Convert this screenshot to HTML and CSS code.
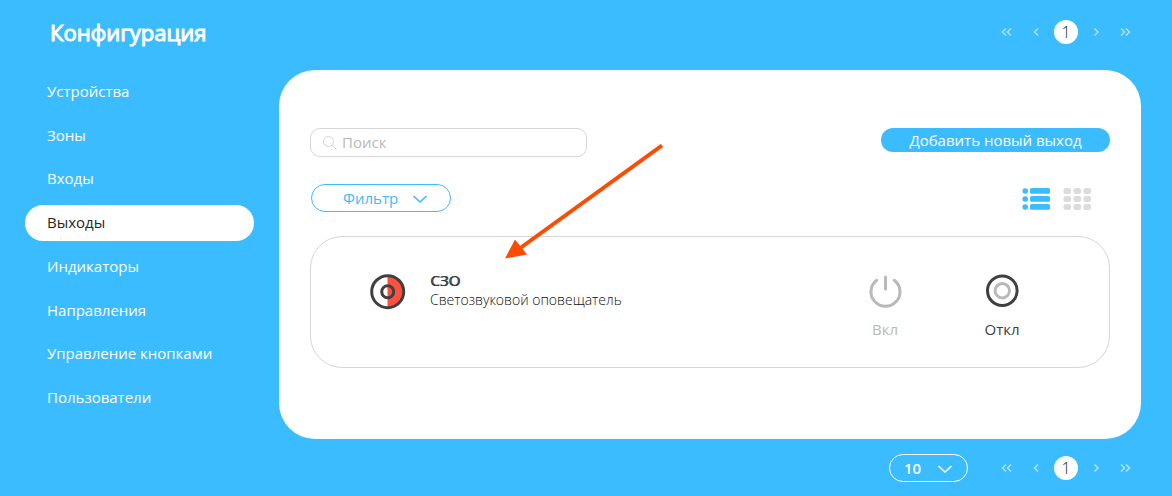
FILE: index.html
```
<!DOCTYPE html>
<html lang="ru">
<head>
    <meta charset="UTF-8">
    <meta name="viewport" content="width=device-width, initial-scale=1.0">
    <title>Конфигурация</title>
    <link rel="stylesheet" href="styles.css">
</head>
<body>
    <header class="header">
        <h1>Конфигурация</h1>
        <nav class="pager" aria-label="Страницы">
            <button type="button" aria-label="Первая"><svg width="12" height="10" viewBox="0 0 12 10"><path d="M6 1.500 2.500 5 6 8.500M11 1.500 7.500 5 11 8.500"/></svg></button>
            <button type="button" aria-label="Назад"><svg width="12" height="10" viewBox="0 0 12 10"><path d="M8 1.500 4.500 5 8 8.500"/></svg></button>
            <button type="button" class="current">1</button>
            <button type="button" aria-label="Вперёд"><svg width="12" height="10" viewBox="0 0 12 10"><path d="M4.500 1.500 8 5 4.500 8.500"/></svg></button>
            <button type="button" aria-label="Последняя"><svg width="12" height="10" viewBox="0 0 12 10"><path d="M1 1.500 4.500 5 1 8.500M6 1.500 9.500 5 6 8.500"/></svg></button>
        </nav>
    </header>
    <div class="layout">
        <nav class="menu">
            <a href="#devices">Устройства</a>
            <a href="#zones">Зоны</a>
            <a href="#inputs">Входы</a>
            <a href="#outputs" class="active">Выходы</a>
            <a href="#indicators">Индикаторы</a>
            <a href="#directions">Направления</a>
            <a href="#buttons">Управление кнопками</a>
            <a href="#users">Пользователи</a>
        </nav>
        <main class="panel">
            <div class="toolbar">
                <label class="search">
                    <svg width="14" height="14" viewBox="0 0 14 14"><circle cx="5.500" cy="5.500" r="5"/><path d="M9 9l4.500 4.500"/></svg>
                    <input type="text" placeholder="Поиск" aria-label="Поиск">
                </label>
                <button type="button" class="add-button">Добавить новый выход</button>
            </div>
            <div class="filters">
                <div class="dropdown filter">
                    <select aria-label="Фильтр"><option>Фильтр</option></select>
                    <svg width="16" height="10" viewBox="0 0 16 10"><path d="M1.500 2l6.500 6 6.500-6"/></svg>
                </div>
                <div class="views">
                    <button type="button" aria-label="Список">
                        <svg width="28" height="22" viewBox="0 0 28 22" fill="#3bbcff">
                            <circle cx="3.200" cy="3" r="2.800"/><circle cx="3.200" cy="11" r="2.800"/><circle cx="3.200" cy="19" r="2.800"/>
                            <rect x="8" width="20" height="5.800" rx="1.500"/><rect x="8" y="8" width="20" height="5.800" rx="1.500"/><rect x="8" y="16" width="20" height="5.800" rx="1.500"/>
                        </svg>
                    </button>
                    <button type="button" aria-label="Плитка">
                        <svg width="28" height="22" viewBox="0 0 28 22" fill="#dcdcdc">
                            <rect x="0.500" width="7.500" height="6" rx="2"/><rect x="10.500" width="7.500" height="6" rx="2"/><rect x="20.500" width="7.500" height="6" rx="2"/>
                            <rect x="0.500" y="8" width="7.500" height="6" rx="2"/><rect x="10.500" y="8" width="7.500" height="6" rx="2"/><rect x="20.500" y="8" width="7.500" height="6" rx="2"/>
                            <rect x="0.500" y="16" width="7.500" height="6" rx="2"/><rect x="10.500" y="16" width="7.500" height="6" rx="2"/><rect x="20.500" y="16" width="7.500" height="6" rx="2"/>
                        </svg>
                    </button>
                </div>
            </div>
            <div class="card">
                <svg class="card-icon" width="36" height="36" viewBox="0 0 36 36" fill="none" stroke="#404042" stroke-width="3">
                    <path d="M17.500 1.500a16 16 0 0 1 0 32.500z" fill="#fc523d" stroke="none"/>
                    <circle cx="17.700" cy="17.700" r="16"/>
                    <circle cx="17.700" cy="17.700" r="6"/>
                </svg>
                <div class="card-text">
                    <h2>СЗО</h2>
                    <p>Светозвуковой оповещатель</p>
                </div>
                <div class="actions">
                    <button type="button" class="off">
                        <svg width="34" height="34" viewBox="0 0 34 34" fill="none" stroke="#b9b9b9" stroke-width="3" stroke-linecap="round">
                            <path d="M17.500 3v12M8.700 6.300a14.500 14.500 0 1 0 17.600 0"/>
                        </svg>
                        Вкл
                    </button>
                    <button type="button">
                        <svg width="34" height="34" viewBox="0 0 34 34" fill="none" stroke-width="3">
                            <circle cx="17.300" cy="16.700" r="14.800" stroke="#404042"/>
                            <circle cx="17.300" cy="16.700" r="7.200" stroke="#b9b9b9"/>
                        </svg>
                        Откл
                    </button>
                </div>
            </div>
            <!-- стрелка-указатель поверх панели -->
            <svg class="pointer" width="160" height="116" viewBox="0 0 160 116">
                <path d="M157 1.500L16 103.500" stroke="#ff4b00" stroke-width="4"/>
                <path d="M0 114.500L10 95.500 22 110.500z" fill="#ff4b00"/>
            </svg>
        </main>
    </div>
    <footer class="footer">
        <div class="dropdown page-size">
            <select aria-label="Записей на странице"><option>10</option></select>
            <svg width="16" height="10" viewBox="0 0 16 10"><path d="M1.500 2l6.500 6 6.500-6"/></svg>
        </div>
        <nav class="pager" aria-label="Страницы">
            <button type="button" aria-label="Первая"><svg width="12" height="10" viewBox="0 0 12 10"><path d="M6 1.500 2.500 5 6 8.500M11 1.500 7.500 5 11 8.500"/></svg></button>
            <button type="button" aria-label="Назад"><svg width="12" height="10" viewBox="0 0 12 10"><path d="M8 1.500 4.500 5 8 8.500"/></svg></button>
            <button type="button" class="current">1</button>
            <button type="button" aria-label="Вперёд"><svg width="12" height="10" viewBox="0 0 12 10"><path d="M4.500 1.500 8 5 4.500 8.500"/></svg></button>
            <button type="button" aria-label="Последняя"><svg width="12" height="10" viewBox="0 0 12 10"><path d="M1 1.500 4.500 5 1 8.500M6 1.500 9.500 5 6 8.500"/></svg></button>
        </nav>
    </footer>
</body>
</html>
```
FILE: styles.css
```
* {
    box-sizing: border-box;
}
body {
    margin: 0;
    padding: 0 31px 0 25px;
    font-family: "Open Sans", "Noto Sans", sans-serif;
    font-size: 15px;
    line-height: 20px;
    color: #404042;
    background-color: #3bbcff;
}
button, input, select {
    font: inherit;
    color: inherit;
    background: none;
    border: none;
    margin: 0;
    padding: 0;
}
button, select {
    cursor: pointer;
}
h1, h2, p {
    margin: 0;
}
svg {
    display: block;
}
.header {
    display: flex;
    justify-content: space-between;
    align-items: center;
    height: 70px;
    padding: 0 0 6px 25px;
}
.header h1 {
    font-size: 22px;
    line-height: 30px;
    font-weight: 400;
    -webkit-text-stroke: 1px white;
    color: white;
}
.pager {
    display: grid;
    grid-template-columns: repeat(5, 30px);
    align-items: center;
    justify-items: center;
}
.pager svg {
    fill: none;
    stroke: #b1e4ff;
    stroke-width: 1.5;
}
.pager .current {
    width: 24px;
    height: 24px;
    border-radius: 50%;
    background-color: white;
    color: #262626;
    font-size: 16px;
    font-weight: 300;
}
.layout {
    display: grid;
    grid-template-columns: 229px 1fr;
    gap: 25px;
}
.menu {
    display: flex;
    flex-direction: column;
    justify-content: space-between;
    padding: 4px 0 23px;
}
.menu a {
    padding: 7px 22px 9px;
    border-radius: 18px;
    color: white;
    font-weight: 500;
    text-decoration: none;
}
.menu .active {
    background-color: white;
    color: #262626;
    font-weight: 400;
}
.panel {
    position: relative;
    padding: 58px 31px 71px;
    border-radius: 36px;
    background-color: white;
}
.toolbar {
    display: flex;
    justify-content: space-between;
    align-items: flex-start;
}
.search {
    display: flex;
    align-items: center;
    gap: 5px;
    width: 277px;
    height: 29px;
    padding: 0 12px;
    border: 1px solid #d6d6d6;
    border-radius: 10px;
}
.search svg {
    fill: none;
    stroke: #d6d6d6;
}
.search input {
    flex: 1;
    min-width: 0;
    height: 20px;
    margin-bottom: 2px;
    outline: none;
}
.search input::placeholder {
    color: #b9b9b9;
    opacity: 1;
}
.add-button {
    width: 229px;
    height: 24px;
    border-radius: 12px;
    background-color: #3bbcff;
    color: white;
    font-weight: 500;
}
.filters {
    display: flex;
    justify-content: space-between;
    align-items: flex-end;
    margin: 27px 0 24px;
    padding: 0 19px 0 1px;
}
.dropdown {
    position: relative;
    color: #3bbcff;
}
.dropdown select {
    appearance: none;
    width: 100%;
    height: 28px;
    border: 1px solid;
    border-radius: 14px;
}
.dropdown svg {
    position: absolute;
    top: 10px;
    fill: none;
    stroke: currentColor;
    stroke-width: 1.6;
    pointer-events: none;
}
.filter {
    width: 140px;
}
.filter select {
    padding-left: 31px;
}
.filter svg {
    right: 23px;
}
.views {
    display: flex;
    gap: 13px;
    padding-bottom: 2px;
}
.card {
    display: flex;
    align-items: flex-start;
    padding: 34px 77px 28px 59px;
    border: 1px solid #d6d6d6;
    border-radius: 32px;
}
.card-icon {
    margin-top: 3px;
}
.card-text {
    flex: 1;
    margin-left: 24px;
    font-size: 14px;
    font-weight: 300;
}
.card-text h2 {
    font-size: 15px;
    line-height: 19px;
    font-weight: 400;
    text-shadow: 1px 0 0 currentColor;
}
.card-text p {
    line-height: 19px;
    color: #111;
}
.actions {
    display: flex;
    gap: 57px;
    padding-top: 3px;
}
.actions button {
    display: flex;
    flex-direction: column;
    align-items: center;
    gap: 11px;
    width: 60px;
}
.actions .off {
    color: #b9b9b9;
}
.pointer {
    position: absolute;
    left: 226px;
    top: 74px;
    pointer-events: none;
}
.footer {
    display: flex;
    justify-content: flex-end;
    align-items: center;
    gap: 23px;
    padding: 15px 0 14px;
}
.page-size {
    width: 79px;
    color: white;
    font-weight: 600;
}
.page-size select {
    padding-left: 14px;
}
.page-size svg {
    right: 15px;
}
```
